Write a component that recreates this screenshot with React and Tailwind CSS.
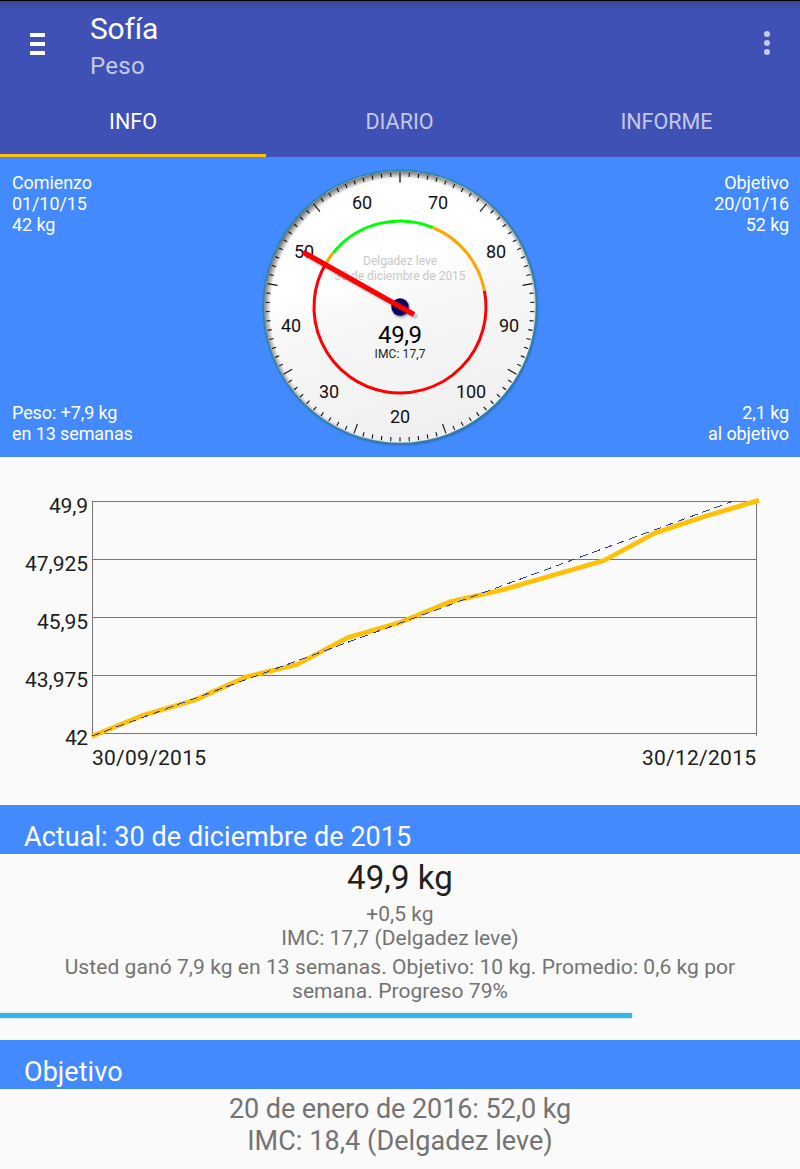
import React from "react";

const point = (deg, r) => {
  const a = (deg * Math.PI) / 180;
  return [138 + r * Math.sin(a), 138 - r * Math.cos(a)];
};

const arc = (from, to, r) => {
  const [x1, y1] = point(from, r);
  const [x2, y2] = point(to, r);
  return `M${x1} ${y1}A${r} ${r} 0 ${to - from > 180 ? 1 : 0} 1 ${x2} ${y2}`;
};

function Header() {
  return (
    <header className="flex h-[157px] flex-col border-t border-black bg-[#3f51b5] bg-linear-to-b from-[#3b4692] from-0% via-[#3f51b5] via-[6%] to-[#3f51b5]">
      <div className="flex h-[84px] items-start">
        <button aria-label="Menú" className="mt-8 ml-[30px] flex w-[15px] flex-col gap-[5px]">
          <span className="h-1 bg-white" />
          <span className="h-1 bg-white" />
          <span className="h-1 bg-white" />
        </button>
        <div className="mt-[10px] ml-[45px] grow">
          <h1 className="text-[30px] leading-[35px] tracking-[-0.2px] text-white">Sofía</h1>
          <p className="mt-1 text-[24px] leading-[32px] tracking-[0.3px] text-white/70">Peso</p>
        </div>
        <button aria-label="Más opciones" className="mt-[30px] mr-[30px] flex flex-col gap-[3px]">
          <span className="size-1.5 rounded-full bg-[#c5cae9]" />
          <span className="size-1.5 rounded-full bg-[#c5cae9]" />
          <span className="size-1.5 rounded-full bg-[#c5cae9]" />
        </button>
      </div>
      <nav className="grid h-[72px] grid-cols-[266px_267px_267px] text-center text-[21.5px] leading-[64px] text-white/70">
        <a className="border-b-3 border-[#ffc107] pt-[5px] text-white">INFO</a>
        <a className="pt-[5px]">DIARIO</a>
        <a className="pt-[5px]">INFORME</a>
      </nav>
    </header>
  );
}

const dialLabels = [
  ["20", 138, 254], ["30", 67, 229], ["40", 29, 163], ["50", 42, 89], ["60", 100, 40],
  ["70", 176, 40], ["80", 234, 89], ["90", 247, 163], ["100", 209, 229],
];

function Gauge() {
  return (
    <svg className="mt-[12px] h-[280px] w-[280px]" viewBox="-2 0 280 280" textAnchor="middle">
      <defs>
        <linearGradient id="face" x1="0.35" y1="0" x2="0.65" y2="1">
          <stop offset="0.35" stopColor="#ffffff" />
          <stop offset="0.5" stopColor="#f7f7f7" />
          <stop offset="1" stopColor="#efefef" />
        </linearGradient>
        <radialGradient id="shade" gradientUnits="userSpaceOnUse" cx="140" cy="141" r="140">
          <stop offset="0.94" stopColor="#000" stopOpacity="0" />
          <stop offset="1" stopColor="#000" stopOpacity="0.65" />
        </radialGradient>
        <filter id="soft" x="-10%" y="-10%" width="120%" height="120%">
          <feGaussianBlur stdDeviation="1.3" />
        </filter>
      </defs>
      <circle cx="139" cy="139.3" r="136.5" fill="#204070" opacity="0.65" filter="url(#soft)" />
      <circle cx="138" cy="138" r="136.6" fill="url(#face)" stroke="#2f83a5" strokeWidth="1.8" />
      <circle cx="138" cy="138" r="135.7" fill="url(#shade)" />
      {Array.from({ length: 90 }, (_, i) => {
        const [x1, y1] = point(i * 4, 134.5);
        const [x2, y2] = point(i * 4, i % 10 === 0 ? 124.5 : 130.3);
        return <line key={i} x1={x1} y1={y1} x2={x2} y2={y2} stroke={i ? "#111" : "#444"} strokeWidth={i ? 1.1 : 1.7} />;
      })}
      <g fill="none" strokeWidth="3">
        <path d={arc(79, 301, 86)} stroke="#ff0000" />
        <path d={arc(301, 309, 86)} stroke="#ffa500" />
        <path d={arc(309, 382.4, 86)} stroke="#00ff00" />
        <path d={arc(22.4, 79, 86)} stroke="#ffa500" />
      </g>
      <g fontSize="18" fill="#111">
        {dialLabels.map(([t, x, y]) => (
          <text key={t} x={x} y={y}>{t}</text>
        ))}
      </g>
      <g fontSize="12" fill="#c8c8c8">
        <text x="138" y="96" textLength="74">Delgadez leve</text>
        <text x="138" y="111" textLength="131">30 de diciembre de 2015</text>
      </g>
      <circle cx="139" cy="139.5" r="9" fill="#000" opacity="0.4" filter="url(#soft)" />
      <circle cx="138" cy="138" r="8.7" fill="#0a0060" />
      <path d="M43 86L154 148" stroke="#000" strokeOpacity="0.3" strokeWidth="4" filter="url(#soft)" />
      <circle cx="153.6" cy="147.3" r="2" fill="#c9c9c9" />
      <path d="M41 83L152 145.5" stroke="#ff0000" strokeWidth="5.2" />
      <text x="138" y="174" fontSize="24" fill="#000" textLength="44">49,9</text>
      <text x="138" y="189" fontSize="12" fill="#222" textLength="51">IMC: 17,7</text>
    </svg>
  );
}

function Dashboard() {
  return (
    <section className="flex h-[300px] justify-between bg-[#448aff] px-[11px] text-[18px] leading-[21px] tracking-[-0.1px] text-white">
      <div className="flex w-[240px] flex-col justify-between pt-[15px] pb-[13px] pl-px">
        <p>Comienzo<br />01/10/15<br />42 kg</p>
        <p>Peso: +7,9 kg<br />en 13 semanas</p>
      </div>
      <Gauge />
      <div className="flex w-[240px] flex-col justify-between pt-[15px] pb-[13px] text-right">
        <p>Objetivo<br />20/01/16<br />52 kg</p>
        <p>2,1 kg<br />al objetivo</p>
      </div>
    </section>
  );
}

const gridLines = [
  ["49,9", 44.5, 39], ["47,925", 102.5, 63], ["45,95", 160.5, 51], ["43,975", 218.5, 63], ["42", 276.5, 23],
];

function Chart() {
  return (
    <svg className="block h-[348px] w-full" viewBox="0 0 800 348">
      <g stroke="#777" strokeWidth="1" shapeRendering="crispEdges">
        {gridLines.map(([t, y]) => <line key={t} x1="92" x2="757" y1={y} y2={y} />)}
        <line x1="92.5" x2="92.5" y1="44" y2="279" />
        <line x1="756.5" x2="756.5" y1="44" y2="279" />
      </g>
      <g fontSize="21" fill="#1c1c1c">
        {gridLines.map(([t, y, w]) => <text key={t} x={88 - w} y={y + 11.5} textLength={w}>{t}</text>)}
        <text x="92" y="308" textLength="114">30/09/2015</text>
        <text x="642" y="308" textLength="114">30/12/2015</text>
      </g>
      <path
        d="M91.5 279.4L144 258L195 243L246 220L297 207.5L348 180.5L400 165.5L451 144.5L502 133L604 103.5L655 76L706 59L759 43.4"
        fill="none" stroke="#ffc107" strokeWidth="4.8" strokeLinejoin="round"
      />
      <path d="M92 279L732 44.5" fill="none" stroke="#303f9f" strokeWidth="1" strokeDasharray="8 5" shapeRendering="crispEdges" />
    </svg>
  );
}

function SectionTitle({ children }) {
  return <h2 className="h-[49px] bg-[#448aff] pt-[15px] pl-6 text-[27px] leading-[34px] tracking-[0.05px] text-white">{children}</h2>;
}

export default function App() {
  return (
    <div className="h-[1169px] w-[800px] overflow-hidden bg-[#fafafa] font-['Roboto',sans-serif]">
      <Header />
      <Dashboard />
      <Chart />
      <SectionTitle>Actual: 30 de diciembre de 2015</SectionTitle>
      <div className="h-[186px] text-center text-[21px] text-[#737373]">
        <p className="pt-1 text-[33px] leading-[40px] tracking-[0.1px] text-[#212121]">49,9 kg</p>
        <p className="pt-1 leading-[24px] tracking-[0.04px]">+0,5 kg<br />IMC: 17,7 (Delgadez leve)</p>
        <p className="pt-[5px] leading-[24px] tracking-[0.07px]">
          Usted ganó 7,9 kg en 13 semanas. Objetivo: 10 kg. Promedio: 0,6 kg por<br />semana. Progreso 79%
        </p>
        <div className="mt-[10px] h-[5px] w-[632px] bg-[#33b5e5] shadow-[0_0_2px_#33b5e588]" />
      </div>
      <SectionTitle>Objetivo</SectionTitle>
      <p className="pt-1 text-center text-[27px] leading-[32px] text-[#737373]">
        <span className="tracking-[-0.07px]">20 de enero de 2016: 52,0 kg</span><br />
        <span className="tracking-[0.07px]">IMC: 18,4 (Delgadez leve)</span>
      </p>
    </div>
  );
}
